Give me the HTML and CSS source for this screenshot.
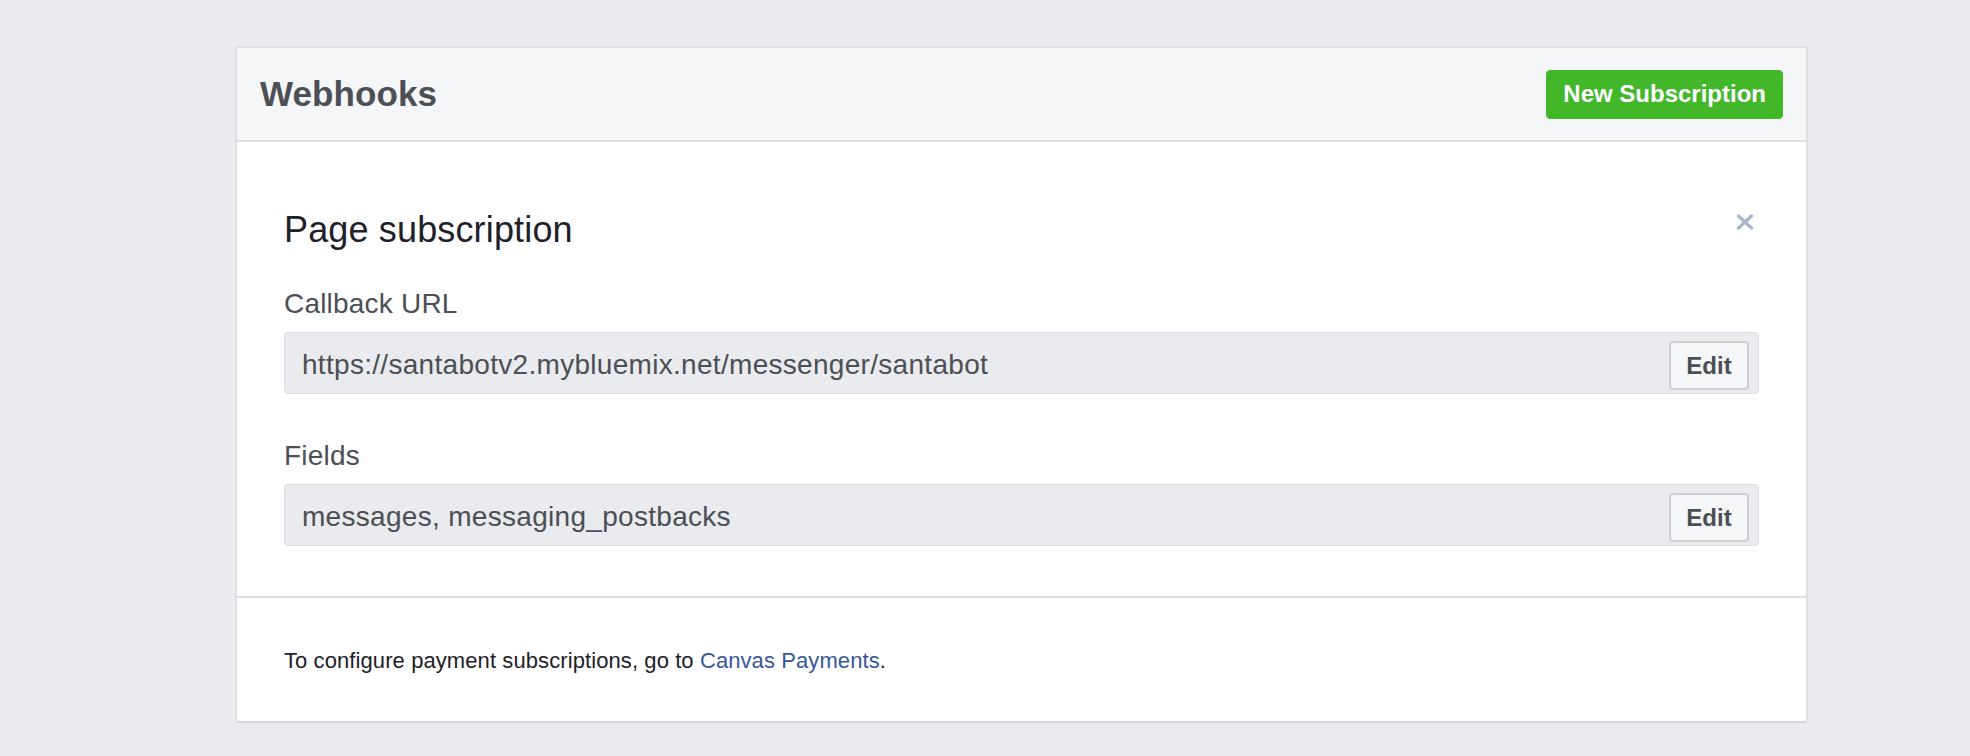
FILE: index.html
```html
<!DOCTYPE html>
<html>
<head>
<meta charset="utf-8">
<link rel="stylesheet" href="styles.css">
</head>
<body>
<div class="card">
  <div class="card-header">
    <h1 class="card-title">Webhooks</h1>
    <button class="btn-green">New Subscription</button>
  </div>
  <div class="card-body">
    <div class="sub-head">
      <h2 class="sub-title">Page subscription</h2>
      <svg class="close" width="18" height="16" viewBox="0 0 18 16">
        <path d="M2.5 2 L15.5 14 M15.5 2 L2.5 14" stroke="#aab6cc" stroke-width="3.4" stroke-linecap="round"/>
      </svg>
    </div>
    <div class="field">
      <div class="field-label">Callback URL</div>
      <div class="field-box">
        <span class="field-value">https://santabotv2.mybluemix.net/messenger/santabot</span>
        <button class="btn-edit">Edit</button>
      </div>
    </div>
    <div class="field field-second">
      <div class="field-label">Fields</div>
      <div class="field-box">
        <span class="field-value">messages, messaging_postbacks</span>
        <button class="btn-edit">Edit</button>
      </div>
    </div>
  </div>
  <div class="card-footer">
    To configure payment subscriptions, go to <a class="link" href="#">Canvas Payments</a>.
  </div>
</div>
</body>
</html>
```

FILE: styles.css
```css
* { box-sizing: border-box; }
html, body {
  margin: 0;
  padding: 0;
  background: #e9ebee;
  font-family: "Liberation Sans", Arial, Helvetica, sans-serif;
}
body {
  padding: 46px 0 0 235px;
  height: 756px;
  overflow: hidden;
}
.card {
  width: 1573px;
  background: #ffffff;
  border: 2px solid #dfe0e4;
  border-bottom-color: #d3d5d9;
  border-radius: 4px;
}
.card-header {
  height: 94px;
  background: #f5f6f7;
  border-bottom: 2px solid #dddfe2;
  border-radius: 3px 3px 0 0;
  display: flex;
  align-items: center;
  justify-content: space-between;
  padding: 0 23px 0 23px;
}
.card-title {
  margin: 0;
  font-size: 35px;
  line-height: 40px;
  font-weight: bold;
  color: #4b4f56;
  letter-spacing: 0.1px;
}
.btn-green {
  height: 49px;
  padding: 0 16px;
  background: #42b72a;
  border: 1px solid #42b72a;
  border-radius: 4px;
  color: #ffffff;
  font-family: inherit;
  font-size: 24px;
  font-weight: bold;
}
.card-body {
  padding: 68px 47px 50px 47px;
}
.sub-head {
  display: flex;
  justify-content: space-between;
  align-items: flex-start;
}
.sub-title {
  margin: 0;
  font-size: 36px;
  line-height: 40px;
  font-weight: normal;
  color: #1d2129;
  letter-spacing: 0.15px;
}
.close {
  margin-top: 4px;
  margin-right: 5px;
}
.field {
  margin-top: 38px;
}
.field-second {
  margin-top: 46px;
}
.field-label {
  font-size: 28px;
  line-height: 32px;
  color: #4b4f56;
  margin-bottom: 12px;
  letter-spacing: 0.2px;
}
.field-box {
  height: 62px;
  display: flex;
  align-items: flex-start;
  background: #e9ebee;
  border: 1px solid #dadde1;
  border-radius: 4px;
  padding: 8px 9px 3px 17px;
}
.field-value {
  flex: 1;
  align-self: center;
  font-size: 28px;
  line-height: 32px;
  color: #4b4f56;
  margin-top: -2px;
  letter-spacing: 0.3px;
}
.btn-edit {
  height: 49px;
  width: 80px;
  padding: 0;
  background: #f5f6f7;
  border: 2px solid #ced0d4;
  border-radius: 4px;
  color: #4b4f56;
  font-family: inherit;
  font-size: 24px;
  font-weight: bold;
}
.card-footer {
  border-top: 2px solid #dddfe2;
  padding: 50px 47px 47px 47px;
  font-size: 22px;
  line-height: 26px;
  color: #1d2129;
  letter-spacing: 0.09px;
}
.link {
  color: #365899;
  text-decoration: none;
}
```
